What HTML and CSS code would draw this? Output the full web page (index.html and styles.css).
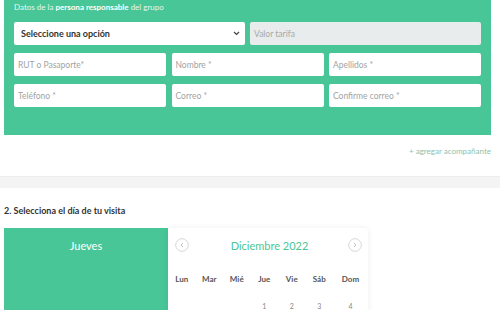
FILE: index.html
```html
<!DOCTYPE html>
<html>
<head>
    <link rel="stylesheet" href="styles.css">
</head>
<body>
    <div class="section-top">
        <div class="panel">
            <div class="panel-title">Datos de la <b>persona responsable</b> del grupo</div>
            <div class="row row-2">
                <div class="field field-select">
                    <span>Seleccione una opción</span>
                    <svg width="7" height="5" viewBox="0 0 7 5"><path d="M1 1l2.5 2.5L6 1" fill="none" stroke="#444" stroke-width="1.2"/></svg>
                </div>
                <div class="field field-disabled">Valor tarifa</div>
            </div>
            <div class="row row-3">
                <div class="field">RUT o Pasaporte*</div>
                <div class="field">Nombre *</div>
                <div class="field">Apellidos *</div>
            </div>
            <div class="row row-3">
                <div class="field">Teléfono *</div>
                <div class="field">Correo *</div>
                <div class="field">Confirme correo *</div>
            </div>
        </div>
        <div class="add-link">+ agregar acompañante</div>
    </div>

    <div class="band"></div>

    <div class="section-day">
        <div class="section-title">2. Selecciona el día de tu visita</div>
        <div class="calendar-wrap">
            <div class="day-box">Jueves</div>
            <div class="calendar">
                <div class="cal-head">
                    <span class="cal-arrow">
                        <svg width="14" height="14" viewBox="0 0 14 14"><circle cx="7" cy="7" r="6.3" fill="none" stroke="#d6d6d6"/><path d="M8 5L6 7l2 2" fill="none" stroke="#c4c4c4" stroke-width="1"/></svg>
                    </span>
                    <span class="cal-title">Diciembre 2022</span>
                    <span class="cal-arrow">
                        <svg width="14" height="14" viewBox="0 0 14 14"><circle cx="7" cy="7" r="6.3" fill="none" stroke="#d6d6d6"/><path d="M6 5l2 2-2 2" fill="none" stroke="#c4c4c4" stroke-width="1"/></svg>
                    </span>
                </div>
                <div class="cal-grid cal-days">
                    <span>Lun</span><span>Mar</span><span>Mié</span><span>Jue</span><span>Vie</span><span>Sáb</span><span>Dom</span>
                </div>
                <div class="cal-grid cal-nums">
                    <span></span><span></span><span></span><span>1</span><span>2</span><span>3</span><span>4</span>
                </div>
            </div>
        </div>
    </div>
</body>
</html>
```

FILE: styles.css
```css
body {
    margin: 0;
    padding: 0;
    font-family: Lato, 'Open Sans', sans-serif;
    background: #fff;
    width: 500px;
    height: 310px;
    overflow: hidden;
}

.section-top {
    padding: 0 9px 0 4px;
}

.panel {
    background: #48c698;
    padding: 0 10px 28px 10px;
}

.panel-title {
    font-size: 8px;
    line-height: 14px;
    color: #e4f7ef;
    margin-bottom: 8px;
}

.panel-title b {
    color: #fff;
}

.row {
    display: grid;
    gap: 5.5px;
    margin-bottom: 8px;
}

.row:last-child {
    margin-bottom: 0;
}

.row-2 {
    grid-template-columns: 1fr 1fr;
    gap: 5px;
}

.row-3 {
    grid-template-columns: 1fr 1fr 1fr;
}

.field {
    height: 23px;
    background: #fff;
    border-radius: 2px;
    display: flex;
    align-items: center;
    padding: 0 4px;
    font-size: 8.5px;
    color: #a3a3a3;
}

.field-select {
    justify-content: space-between;
    padding: 0 5px 0 7px;
    font-weight: bold;
    font-size: 9px;
    color: #333;
}

.field-disabled {
    background: #e9ecec;
    color: #a8a8a8;
}

.add-link {
    text-align: right;
    font-size: 8px;
    line-height: 12px;
    color: #8dbfae;
    margin-top: 10px;
    height: 31px;
}

.band {
    height: 11px;
    background: #f4f4f4;
    border-top: 1px solid #ededed;
}

.section-day {
    padding: 16px 0 0 4px;
}

.section-title {
    font-size: 9px;
    font-weight: bold;
    line-height: 14px;
    color: #333;
    margin-bottom: 10px;
}

.calendar-wrap {
    display: flex;
}

.day-box {
    width: 164px;
    height: 120px;
    background: #48c698;
    color: #fff;
    font-size: 11px;
    text-align: center;
    padding-top: 11px;
    box-sizing: border-box;
}

.calendar {
    width: 200px;
    height: 120px;
    background: #fff;
    border-radius: 0 4px 4px 0;
    box-shadow: 0 0 6px rgba(0, 0, 0, 0.07);
}

.cal-head {
    display: flex;
    align-items: center;
    justify-content: space-between;
    padding: 10px 6px 0 7px;
    height: 14px;
}

.cal-arrow {
    display: flex;
}

.cal-title {
    color: #48c698;
    font-size: 11px;
    margin-left: 2px;
}

.cal-grid {
    display: grid;
    grid-template-columns: repeat(6, 27.5px) 1fr;
    text-align: center;
}

.cal-days {
    margin-top: 21px;
    font-size: 8px;
    font-weight: bold;
    color: #555;
    line-height: 12px;
}

.cal-nums {
    margin-top: 16px;
    font-size: 7px;
    color: #888;
    line-height: 10px;
}
```
